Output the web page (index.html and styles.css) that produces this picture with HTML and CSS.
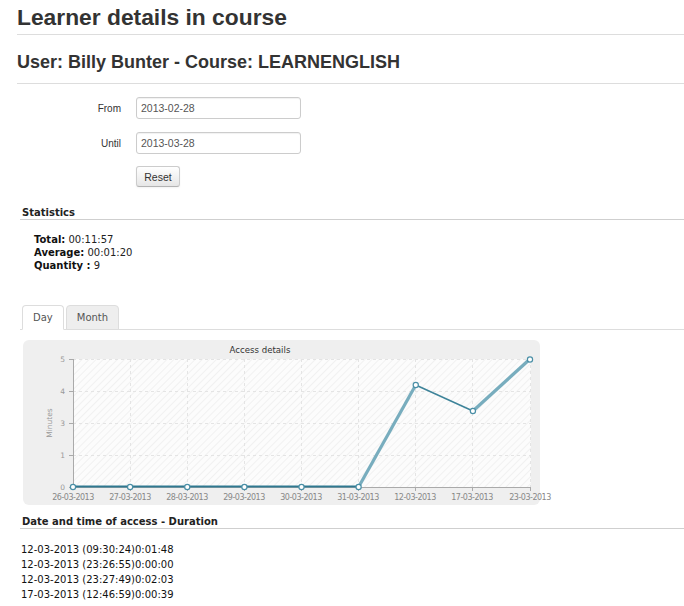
FILE: index.html
```html
<!DOCTYPE html>
<html>
<head>
<meta charset="utf-8">
<title>Learner details in course</title>
<link rel="stylesheet" href="styles.css">
</head>
<body>
<div class="page">
  <h1 class="title">Learner details in course</h1>
  <h2 class="subtitle">User: Billy Bunter - Course: LEARNENGLISH</h2>

  <form class="filter">
    <label class="filter-label" for="from">From</label>
    <input class="filter-input" id="from" type="text" value="2013-02-28">
    <label class="filter-label" for="until">Until</label>
    <input class="filter-input" id="until" type="text" value="2013-03-28">
    <span></span>
    <button class="btn" type="button">Reset</button>
  </form>

  <section class="block">
    <h3 class="block-title">Statistics</h3>
    <div class="stats">
      <div><b>Total:</b> 00:11:57</div>
      <div><b>Average:</b> 00:01:20</div>
      <div><b>Quantity :</b> 9</div>
    </div>
  </section>

  <section class="block tabs-block">
    <ul class="tabs">
      <li class="tab active">Day</li>
      <li class="tab">Month</li>
    </ul>
    <div class="chart">
      <svg width="517" height="165" viewBox="0 0 517 165" xmlns="http://www.w3.org/2000/svg">
        <defs>
          <pattern id="hatch" patternUnits="userSpaceOnUse" width="5" height="5" patternTransform="rotate(45)">
            <rect width="5" height="5" fill="#fcfcfc"/>
            <line x1="0" y1="0" x2="0" y2="5" stroke="#f1f1f1" stroke-width="2"/>
          </pattern>
        </defs>
        <text class="c-title" x="237" y="13" text-anchor="middle">Access details</text>
        <rect x="50" y="19" width="458" height="128" fill="url(#hatch)"/>
        <g stroke="#e4e4e4" stroke-width="1" stroke-dasharray="3,3" fill="none">
          <line x1="50" y1="19.5" x2="508" y2="19.5"/>
          <line x1="50" y1="51.5" x2="508" y2="51.5"/>
          <line x1="50" y1="83.5" x2="508" y2="83.5"/>
          <line x1="50" y1="115.5" x2="508" y2="115.5"/>
          <line x1="107.5" y1="19" x2="107.5" y2="147"/>
          <line x1="164.5" y1="19" x2="164.5" y2="147"/>
          <line x1="221.5" y1="19" x2="221.5" y2="147"/>
          <line x1="278.5" y1="19" x2="278.5" y2="147"/>
          <line x1="335.5" y1="19" x2="335.5" y2="147"/>
          <line x1="392.5" y1="19" x2="392.5" y2="147"/>
          <line x1="449.5" y1="19" x2="449.5" y2="147"/>
          <line x1="507.5" y1="19" x2="507.5" y2="147"/>
        </g>
        <g stroke="#aaaaaa" stroke-width="1" fill="none">
          <line x1="50.5" y1="19" x2="50.5" y2="147.5"/>
          <line x1="50" y1="147.5" x2="508" y2="147.5"/>
          <line x1="46" y1="19.5" x2="50" y2="19.5"/>
          <line x1="46" y1="51.5" x2="50" y2="51.5"/>
          <line x1="46" y1="83.5" x2="50" y2="83.5"/>
          <line x1="46" y1="115.5" x2="50" y2="115.5"/>
          <line x1="46" y1="147.5" x2="50" y2="147.5"/>
          <line x1="107.5" y1="147" x2="107.5" y2="151"/>
          <line x1="164.5" y1="147" x2="164.5" y2="151"/>
          <line x1="221.5" y1="147" x2="221.5" y2="151"/>
          <line x1="278.5" y1="147" x2="278.5" y2="151"/>
          <line x1="335.5" y1="147" x2="335.5" y2="151"/>
          <line x1="392.5" y1="147" x2="392.5" y2="151"/>
          <line x1="449.5" y1="147" x2="449.5" y2="151"/>
          <line x1="507.5" y1="147" x2="507.5" y2="151"/>
        </g>
        <g class="c-ylab" text-anchor="end">
          <text x="42" y="22">5</text>
          <text x="42" y="54">4</text>
          <text x="42" y="86">3</text>
          <text x="42" y="118">1</text>
          <text x="42" y="150">0</text>
        </g>
        <text class="c-ylab" x="29" y="83" text-anchor="middle" transform="rotate(-90 29 83)">Minutes</text>
        <g class="c-xlab" text-anchor="middle">
          <text x="50" y="160">26-03-2013</text>
          <text x="107" y="160">27-03-2013</text>
          <text x="164" y="160">28-03-2013</text>
          <text x="221" y="160">29-03-2013</text>
          <text x="278" y="160">30-03-2013</text>
          <text x="335" y="160">31-03-2013</text>
          <text x="392" y="160">12-03-2013</text>
          <text x="449" y="160">17-03-2013</text>
          <text x="507" y="160">23-03-2013</text>
        </g>
        <polyline points="50,146.5 335.6,146.5" fill="none" stroke="#2f7890" stroke-width="2.2"/>
        <polyline points="335.6,147 392.75,45" fill="none" stroke="#78adbe" stroke-width="3.2" stroke-linejoin="round"/>
        <polyline points="392.75,45 449.9,71" fill="none" stroke="#3d8399" stroke-width="1.5"/>
        <polyline points="449.9,71 507,19" fill="none" stroke="#78adbe" stroke-width="3.2"/>
        <g fill="#ffffff" stroke="#4a8fa6" stroke-width="1.2">
          <circle cx="50" cy="147" r="2.6"/>
          <circle cx="107.1" cy="147" r="2.6"/>
          <circle cx="164.25" cy="147" r="2.6"/>
          <circle cx="221.4" cy="147" r="2.6"/>
          <circle cx="278.5" cy="147" r="2.6"/>
          <circle cx="335.6" cy="147" r="2.6"/>
          <circle cx="392.75" cy="45" r="2.6"/>
          <circle cx="449.9" cy="71" r="2.6"/>
          <circle cx="507" cy="19.5" r="2.6"/>
        </g>
      </svg>
    </div>
  </section>

  <section class="block">
    <h3 class="block-title date-title">Date and time of access - Duration</h3>
    <div class="access-list">
      <div>12-03-2013 (09:30:24)0:01:48</div>
      <div>12-03-2013 (23:26:55)0:00:00</div>
      <div>12-03-2013 (23:27:49)0:02:03</div>
      <div>17-03-2013 (12:46:59)0:00:39</div>
    </div>
  </section>
</div>
</body>
</html>
```
FILE: styles.css
```css
html, body {
  margin: 0;
  padding: 0;
  background: #ffffff;
}

.page {
  padding-left: 17px;
  font-family: "DejaVu Sans", sans-serif;
  font-size: 10px;
  color: #222;
}

.title {
  margin: 0;
  padding: 3px 0 3px;
  font-family: "Liberation Sans", Arial, sans-serif;
  font-size: 22.8px;
  line-height: 28px;
  font-weight: bold;
  color: #333;
  border-bottom: 1px solid #dddddd;
}

.subtitle {
  margin: 16px 0 0;
  padding: 0 0 10px;
  font-family: "Liberation Sans", Arial, sans-serif;
  font-size: 18px;
  line-height: 22px;
  font-weight: bold;
  color: #333;
  border-bottom: 1px solid #dddddd;
}

.filter {
  display: grid;
  grid-template-columns: 104px 165px;
  column-gap: 15px;
  row-gap: 13px;
  align-items: center;
  margin: 13px 0 0;
  font-family: "Liberation Sans", Arial, sans-serif;
}

.filter-label {
  text-align: right;
  font-size: 10px;
  color: #333;
}

.filter-input {
  box-sizing: border-box;
  width: 165px;
  height: 22px;
  margin: 0;
  padding: 0 4px;
  border: 1px solid #cccccc;
  border-radius: 3px;
  font-family: "Liberation Sans", Arial, sans-serif;
  font-size: 10.5px;
  color: #555;
  background: #fff;
  box-shadow: inset 0 1px 1px rgba(0,0,0,0.06);
}

.btn {
  box-sizing: border-box;
  justify-self: start;
  width: 44px;
  height: 21px;
  margin-top: -1px;
  padding: 0;
  border: 1px solid #cccccc;
  border-bottom-color: #b3b3b3;
  border-radius: 3px;
  background: linear-gradient(#ffffff, #e6e6e6);
  font-family: "Liberation Sans", Arial, sans-serif;
  font-size: 10.5px;
  color: #333;
  box-shadow: 0 1px 2px rgba(0,0,0,0.05);
}

.block {
  margin-left: 3px;
}

.block-title {
  margin: 20px 0 0;
  padding: 0 0 0 2px;
  font-size: 10px;
  line-height: 12px;
  font-weight: bold;
  color: #222;
  border-bottom: 1px solid #cfcfcf;
}

.stats {
  margin-top: 13px;
  padding-left: 14px;
  line-height: 13px;
  color: #222;
}

.stats b {
  color: #111;
}

.tabs-block {
  margin-top: 33px;
}

.tabs {
  display: flex;
  gap: 2px;
  margin: 0;
  padding: 0 0 0 2px;
  list-style: none;
  border-bottom: 1px solid #dddddd;
}

.tab {
  margin-bottom: -1px;
  padding: 0 10px;
  height: 23px;
  line-height: 23px;
  font-size: 10px;
  color: #555;
  background: #eeeeee;
  border: 1px solid #dddddd;
  border-radius: 4px 4px 0 0;
}

.tab.active {
  background: #ffffff;
  border-bottom-color: #ffffff;
}

.chart {
  width: 517px;
  height: 165px;
  margin: 10px 0 0 3px;
  background: #efefef;
  border-radius: 6px;
}

.chart svg {
  display: block;
  overflow: visible;
}

.c-title {
  font-family: "DejaVu Sans", sans-serif;
  font-size: 8.6px;
  fill: #333;
}

.c-ylab {
  font-family: "DejaVu Sans", sans-serif;
  font-size: 7.5px;
  fill: #999;
}

.c-xlab {
  font-family: "DejaVu Sans", sans-serif;
  font-size: 8px;
  letter-spacing: -0.5px;
  fill: #888;
}

.date-title {
  margin-top: 11px;
}

.access-list {
  margin-top: 13px;
  margin-left: 1px;
  line-height: 15px;
  color: #111;
}
```
